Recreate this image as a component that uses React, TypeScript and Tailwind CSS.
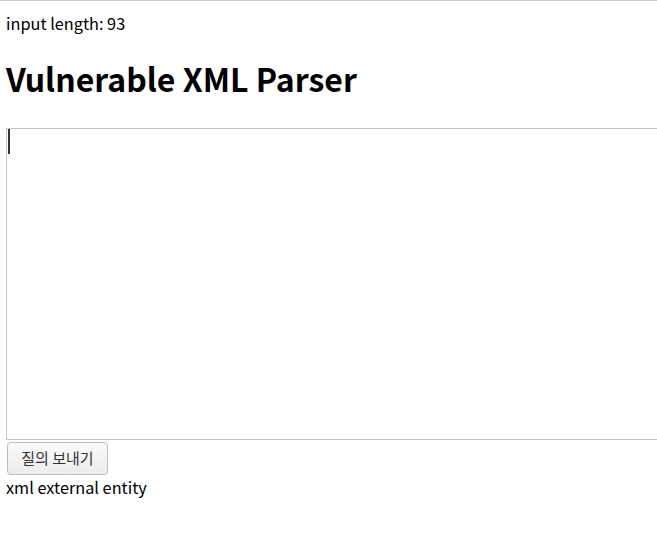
export default function App() {
  return (
    <div
      className="min-h-[539px] border-t border-[#cfcfcf] bg-white px-[6px] text-black overflow-hidden"
      style={{ fontFamily: '"Noto Sans CJK KR", "Noto Sans", sans-serif' }}
    >
      <p className="mt-[11px] text-[16.3px] leading-[22px]">input length: 93</p>

      <h1 className="mt-[22px] text-[32px] font-bold leading-[44px]">
        Vulnerable XML Parser
      </h1>

      <div className="relative mt-[28px]">
        <textarea
          autoFocus
          className="block h-[312px] w-[700px] resize-none border border-[#c4c4c4] p-[2px] outline-none"
        />
        {/* caret */}
        <span className="pointer-events-none absolute left-[2px] top-[1px] h-[25px] w-[2px] bg-[#333]" />
      </div>

      <button className="mt-[2px] ml-px h-[33px] w-[101px] rounded-[4px] border border-[#bdbdbd] bg-gradient-to-b from-[#fafafa] to-[#ececec] text-[15px] text-[#333]">
        질의 보내기
      </button>

      <p className="mt-0 text-[16.3px] leading-[24px]">xml external entity</p>
    </div>
  );
}
